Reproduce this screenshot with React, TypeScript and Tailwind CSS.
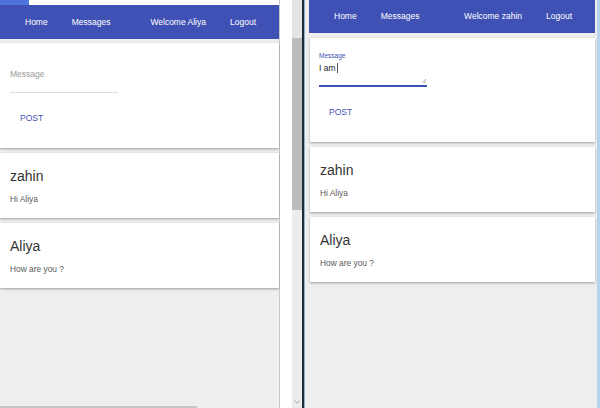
import React from 'react';

const font = { fontFamily: '"Liberation Sans", Arial, sans-serif' };

function NavBar({ user, className }: { user: string; className: string }) {
  return (
    <nav className={`flex items-center bg-[#3f51b5] text-white text-[8.5px] pl-[13px] pr-[11px] ${className}`}>
      <a className="px-[12px]">Home</a>
      <a className="px-[12px]">Messages</a>
      <div className="ml-auto flex">
        <a className="px-[12px]">Welcome {user}</a>
        <a className="px-[12px]">Logout</a>
      </div>
    </nav>
  );
}

function MessageCard({ name, text }: { name: string; text: string }) {
  return (
    <div className="bg-white px-[10px] pt-[15px] pb-[14px] shadow-[0_1px_3px_rgba(0,0,0,0.12),0_1px_2px_rgba(0,0,0,0.24)]">
      <div className="text-[14px] leading-[16px] text-[#333]">{name}</div>
      <div className="mt-[10px] text-[8.4px] leading-[10px] text-[#5a5a5a]">{text}</div>
    </div>
  );
}

function PostButton() {
  return (
    <div className="mt-[20px] px-[10px] text-[8.5px] leading-[10px] text-[#3f51b5]">POST</div>
  );
}

function EmptyForm() {
  return (
    <div className="bg-white h-[105px] px-[10px] pt-[26px] shadow-[0_1px_3px_rgba(0,0,0,0.12),0_1px_2px_rgba(0,0,0,0.24)]">
      <div className="w-[108px]">
        <div className="text-[8.5px] leading-[10px] text-[#9a9a9a]">Message</div>
        <div className="mt-[13px] h-px bg-[#dcdcdc]" />
      </div>
      <PostButton />
    </div>
  );
}

function TypingForm() {
  return (
    <div className="bg-white h-[104px] px-[9px] pt-[14px] shadow-[0_1px_3px_rgba(0,0,0,0.12),0_1px_2px_rgba(0,0,0,0.24)]">
      <div className="relative w-[108px]">
        <div className="text-[6.5px] leading-[8px] text-[#3f51b5]">Message</div>
        <div className="mt-[3px] flex items-center text-[8.5px] leading-[10px] text-[#222]">
          I am
          <span className="ml-[1px] inline-block w-px h-[10px] bg-[#555]" />
        </div>
        <svg className="absolute right-[1px] top-[26px]" width="5" height="5" viewBox="0 0 5 5">
          <path d="M5 1 L1 5 M5 3 L3 5" stroke="#999" strokeWidth="0.8" />
        </svg>
        <div className="mt-[12px] h-[2px] bg-[#3f51b5]" />
      </div>
      <PostButton />
    </div>
  );
}

export default function App() {
  return (
    <div className="w-[600px] h-[408px] flex overflow-hidden bg-white" style={font}>
      {/* left window */}
      <div className="w-[280px] flex flex-col border-r border-[#c8c8c8] bg-[#eeeeee]">
        <div className="h-[5px] bg-white flex">
          <div className="w-[29px] bg-[#4f73dc]" />
        </div>
        <NavBar user="Aliya" className="h-[34px]" />
        <div className="flex-1 flex flex-col gap-[5px] pt-[4px]">
          <EmptyForm />
          <MessageCard name="zahin" text="Hi Aliya" />
          <MessageCard name="Aliya" text="How are you ?" />
        </div>
        <div className="h-[2px] w-[197px] bg-[#c4c4c4]" />
      </div>

      {/* scrollbar of left window */}
      <div className="w-[12px] bg-white" />
      <div className="w-[10px] flex flex-col">
        <div className="h-[38px] bg-[#e4e4e4]" />
        <div className="h-[172px] bg-[#bdbdbd]" />
        <div className="flex-1 bg-[#ececec] flex items-end justify-center pb-[4px]">
          <svg width="6" height="4" viewBox="0 0 6 4">
            <path d="M0.5 0.5 L3 3 L5.5 0.5" stroke="#9a9a9a" strokeWidth="0.9" fill="none" />
          </svg>
        </div>
      </div>
      <div className="w-[2px] bg-[#1c2f36]" />
      <div className="w-px bg-[#8fb3c4]" />

      {/* right window */}
      <div className="w-[295px] bg-[#eeeeee] pl-[4px] pr-[2px] border-r-[3px] border-[#b8d4ec]">
        <NavBar user="zahin" className="h-[33px]" />
        <div className="flex flex-col gap-[5px] pt-[5px] pl-px">
          <TypingForm />
          <MessageCard name="zahin" text="Hi Aliya" />
          <MessageCard name="Aliya" text="How are you ?" />
        </div>
      </div>
    </div>
  );
}
